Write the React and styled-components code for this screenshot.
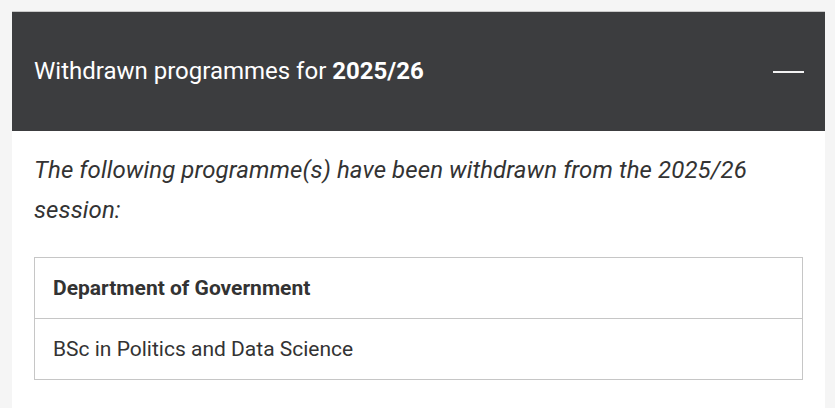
import React from "react";
import styled, { createGlobalStyle } from "styled-components";

const Global = createGlobalStyle`
  html, body { margin: 0; padding: 0; }
  body {
    background: #f5f5f5;
    font-family: Roboto, "Liberation Sans", Arial, sans-serif;
  }
`;

const Page = styled.div`
  padding: 11px 10px 0 12px;
`;

const Panel = styled.section`
  background: #ffffff;
  border-top: 1px solid #c9c9c9;
`;

const Header = styled.div`
  display: flex;
  align-items: center;
  justify-content: space-between;
  height: 119px;
  padding: 0 21px 0 22px;
  background: #3c3d3f;
  color: #ffffff;
`;

const Title = styled.h2`
  margin: 0;
  font-size: 24px;
  font-weight: 400;
  line-height: 1.2;
  b { font-weight: 700; }
`;

const Toggle = styled.span`
  display: block;
  width: 31px;
  height: 2px;
  background: #f2f2f2;
`;

const Body = styled.div`
  padding: 19px 22px 40px 22px;
`;

const Intro = styled.p`
  margin: 0 0 27px;
  font-size: 24px;
  font-style: italic;
  line-height: 40px;
  letter-spacing: 0.1px;
  color: #333333;
`;

const Table = styled.table`
  width: 100%;
  border-collapse: collapse;
  border: 1px solid #c6c6c6;
`;

const Cell = styled.td`
  padding: 18px 18px;
  font-size: 21px;
  line-height: 24px;
  color: #333333;
  font-weight: ${(p) => (p.$head ? 700 : 400)};
  border-bottom: 1px solid #c6c6c6;
`;

export default function App() {
  return (
    <>
      <Global />
      <Page>
        <Panel>
          <Header>
            <Title>
              Withdrawn programmes for <b>2025/26</b>
            </Title>
            <Toggle aria-label="collapse" />
          </Header>
          <Body>
            <Intro>
              The following programme(s) have been withdrawn from the 2025/26
              session:
            </Intro>
            <Table>
              <tbody>
                <tr>
                  <Cell $head>Department of Government</Cell>
                </tr>
                <tr>
                  <Cell>BSc in Politics and Data Science</Cell>
                </tr>
              </tbody>
            </Table>
          </Body>
        </Panel>
      </Page>
    </>
  );
}
